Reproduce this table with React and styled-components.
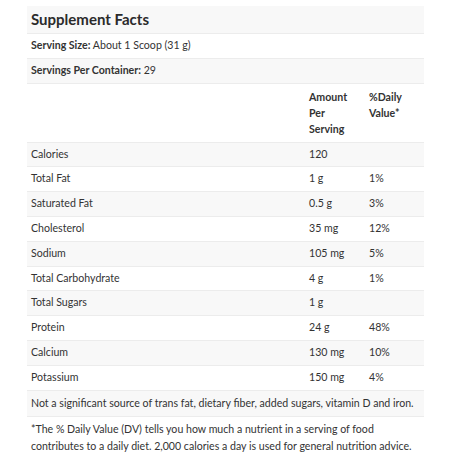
import styled, { createGlobalStyle } from "styled-components";

const GlobalStyle = createGlobalStyle`
    body {
        margin: 0;
        background: #fff;
        font-family: Lato, "Liberation Sans", sans-serif;
        color: #333;
    }
`;

const Wrap = styled.div`
    padding: 6px 30px 0 27px;
`;

const Table = styled.table`
    width: 397px;
    border-collapse: collapse;
    font-size: 10.6px;
    line-height: 15.8px;
`;

const Row = styled.tr`
    background: ${(p) => (p.$shaded ? "#f8f8f8" : "#fff")};
    border-bottom: ${(p) => (p.$last ? "none" : "1px solid #ececec")};
`;

const Cell = styled.td`
    padding: 4px 4px;
    vertical-align: top;
    text-align: left;
    width: ${(p) => p.$w || "auto"};
`;

const HeadCell = styled.th`
    padding: 5px 4px;
    vertical-align: top;
    text-align: left;
    font-weight: 700;
    line-height: 16px;
    width: ${(p) => p.$w || "auto"};
`;

const Title = styled.th`
    padding: 4px 4px 4px;
    text-align: left;
    font-size: 15px;
    line-height: 19px;
    font-weight: 700;
    color: #2b2b2b;
`;

const Bold = styled.b`
    font-weight: 700;
`;

const Note = styled.td`
    padding: 4px 4px;
    line-height: 17px;
`;

const nutrients = [
    ["Calories", "120", ""],
    ["Total Fat", "1 g", "1%"],
    ["Saturated Fat", "0.5 g", "3%"],
    ["Cholesterol", "35 mg", "12%"],
    ["Sodium", "105 mg", "5%"],
    ["Total Carbohydrate", "4 g", "1%"],
    ["Total Sugars", "1 g", ""],
    ["Protein", "24 g", "48%"],
    ["Calcium", "130 mg", "10%"],
    ["Potassium", "150 mg", "4%"],
];

export default function App() {
    return (
        <>
            <GlobalStyle />
            <Wrap>
                <Table>
                    <thead>
                        <Row $shaded>
                            <Title colSpan={3}>Supplement Facts</Title>
                        </Row>
                    </thead>
                    <tbody>
                        <Row>
                            <Cell colSpan={3}>
                                <Bold>Serving Size:</Bold> About 1 Scoop (31 g)
                            </Cell>
                        </Row>
                        <Row $shaded>
                            <Cell colSpan={3}>
                                <Bold>Servings Per Container:</Bold> 29
                            </Cell>
                        </Row>
                        <Row>
                            <HeadCell $w="270px"></HeadCell>
                            <HeadCell $w="52px">Amount Per Serving</HeadCell>
                            <HeadCell>%Daily Value*</HeadCell>
                        </Row>
                        {nutrients.map(([name, amount, dv], i) => (
                            <Row key={name} $shaded={i % 2 === 0}>
                                <Cell>{name}</Cell>
                                <Cell>{amount}</Cell>
                                <Cell>{dv}</Cell>
                            </Row>
                        ))}
                        <Row $shaded>
                            <Note colSpan={3}>
                                Not a significant source of trans fat, dietary fiber, added sugars, vitamin D and iron.
                            </Note>
                        </Row>
                        <Row $last>
                            <Note colSpan={3}>
                                *The % Daily Value (DV) tells you how much a nutrient in a serving of food
                                contributes to a daily diet. 2,000 calories a day is used for general nutrition advice.
                            </Note>
                        </Row>
                    </tbody>
                </Table>
            </Wrap>
        </>
    );
}
